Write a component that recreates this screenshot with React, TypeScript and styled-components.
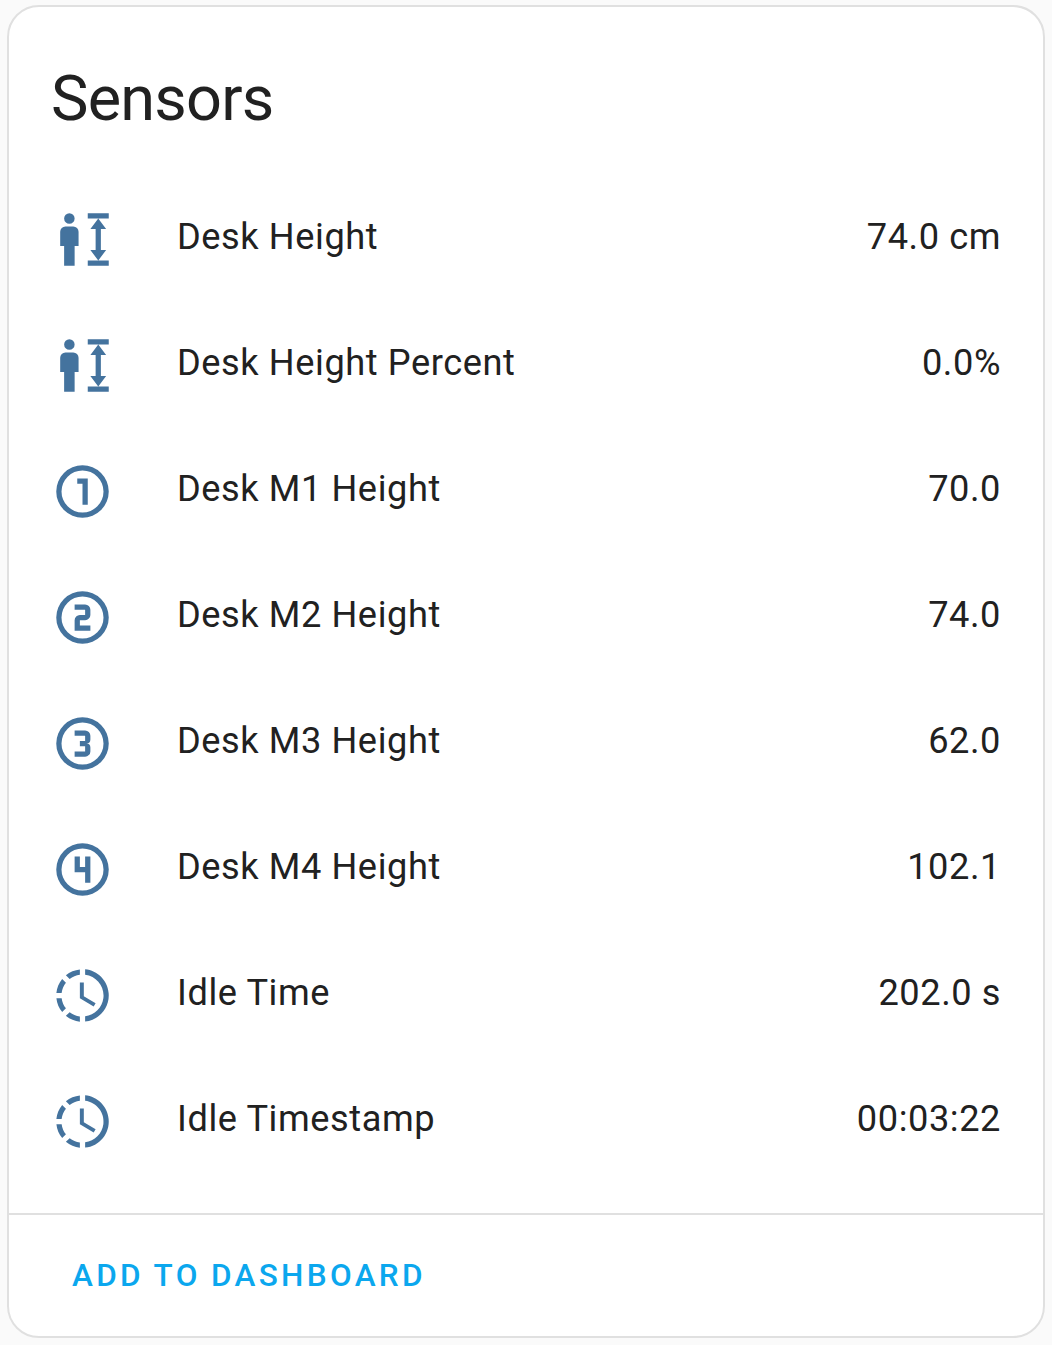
import React from 'react';
import styled, { createGlobalStyle } from 'styled-components';

const GlobalStyle = createGlobalStyle`
  * { box-sizing: border-box; }
  body {
    margin: 0;
    background: #fafafa;
    color: #212121;
    font-family: Roboto, "Noto Sans", sans-serif;
    -webkit-font-smoothing: antialiased;
  }
`;

const Page = styled.main`
  height: 1345px;
  padding: 5px 7px 7px;
  display: flex;
`;

const Card = styled.section`
  flex: 1;
  display: flex;
  flex-direction: column;
  background: #fff;
  border: 2px solid #e0e0e0;
  border-radius: 32px;
`;

const Title = styled.h1`
  margin: 0;
  padding: 29px 42px 0;
  font-size: 63px;
  font-weight: 400;
  line-height: 126px;
  letter-spacing: -0.756px;
`;

const Rows = styled.ul`
  list-style: none;
  margin: 0;
  padding: 25.4px 42px 0;
  display: flex;
  flex-direction: column;
  gap: 21px;
`;

const Row = styled.li`
  height: 105px;
  display: flex;
  align-items: center;
`;

const Icon = styled.svg`
  flex: none;
  width: 63px;
  height: 63px;
  fill: #44739e;
`;

const Value = styled.span`
  font-size: 36.2px;
  line-height: 52px;
  letter-spacing: 0.58px;
  margin-bottom: 5px;
`;

const Name = styled(Value)`
  flex: 1;
  padding-left: 63px;
`;

const Footer = styled.footer`
  margin-top: auto;
  height: 123px;
  padding: 0 42px;
  border-top: 2px solid #e0e0e0;
  display: flex;
  align-items: center;
`;

const Action = styled.button`
  border: 0;
  background: none;
  padding: 0 21px;
  font-family: inherit;
  font-size: 31.5px;
  font-weight: 500;
  line-height: 94px;
  letter-spacing: 3.31px;
  word-spacing: -0.8px;
  text-transform: uppercase;
  color: #0ba7ee;
  cursor: pointer;
`;

const ring =
  'M12 2a10 10 0 1 0 0 20a10 10 0 0 0 0-20m0 2a8 8 0 1 1 0 16a8 8 0 0 1 0-16';

const icons = {
  height:
    'M7 2A2 2 0 0 1 9 4A2 2 0 0 1 7 6A2 2 0 0 1 5 4A2 2 0 0 1 7 2M5.5 7H8.5A2 2 0 0 1 10.5 9V14.5H9V22H5V14.5H3.5V9A2 2 0 0 1 5.5 7M14 2H22V4H18L21 8H19V16H21L18 20H22V22H14V20H18L15 16H17V8H15L18 4H14Z',
  one: ring + 'M10 7V9H12V17H14V7H10Z',
  two: ring + 'M9 7V9H13V11H11A2 2 0 0 0 9 13V17H15V15H11V13H13A2 2 0 0 0 15 11V9A2 2 0 0 0 13 7H9Z',
  three:
    ring +
    'M15 15V13.5A1.5 1.5 0 0 0 13.5 12A1.5 1.5 0 0 0 15 10.5V9A2 2 0 0 0 13 7H9V9H13V11H11V13H13V15H9V17H13A2 2 0 0 0 15 15Z',
  four: ring + 'M9 7V13H13V17H15V7H13V11H11V7H9Z',
  clock:
    'M13 2.03V2.05L13 4.05C17.39 4.59 20.5 8.58 19.96 12.97C19.5 16.61 16.64 19.5 13 19.93V21.93C18.5 21.38 22.5 16.5 21.95 11C21.5 6.25 17.73 2.5 13 2.03M11 2.06C9.05 2.25 7.19 3 5.67 4.26L7.1 5.74C8.22 4.84 9.57 4.26 11 4.06V2.06M4.26 5.67C3 7.19 2.25 9.04 2.05 11H4.05C4.24 9.58 4.8 8.23 5.69 7.1L4.26 5.67M2.06 13C2.26 14.96 3.03 16.81 4.27 18.33L5.69 16.9C4.81 15.77 4.24 14.42 4.06 13H2.06M7.1 18.37L5.67 19.74C7.18 21 9.04 21.79 11 22V20C9.58 19.82 8.23 19.25 7.1 18.37M12.5 7V12.25L17 14.92L16.25 16.15L11 13V7H12.5Z',
};

const sensors: { icon: keyof typeof icons; name: string; value: string }[] = [
  { icon: 'height', name: 'Desk Height', value: '74.0 cm' },
  { icon: 'height', name: 'Desk Height Percent', value: '0.0%' },
  { icon: 'one', name: 'Desk M1 Height', value: '70.0' },
  { icon: 'two', name: 'Desk M2 Height', value: '74.0' },
  { icon: 'three', name: 'Desk M3 Height', value: '62.0' },
  { icon: 'four', name: 'Desk M4 Height', value: '102.1' },
  { icon: 'clock', name: 'Idle Time', value: '202.0 s' },
  { icon: 'clock', name: 'Idle Timestamp', value: '00:03:22' },
];

export default function App() {
  return (
    <>
      <GlobalStyle />
      <Page>
        <Card>
          <Title>Sensors</Title>
          <Rows>
            {sensors.map((s) => (
              <Row key={s.name}>
                <Icon viewBox="0 0 24 24" aria-hidden="true">
                  <path fillRule="evenodd" d={icons[s.icon]} />
                </Icon>
                <Name>{s.name}</Name>
                <Value>{s.value}</Value>
              </Row>
            ))}
          </Rows>
          <Footer>
            <Action type="button">Add to dashboard</Action>
          </Footer>
        </Card>
      </Page>
    </>
  );
}
